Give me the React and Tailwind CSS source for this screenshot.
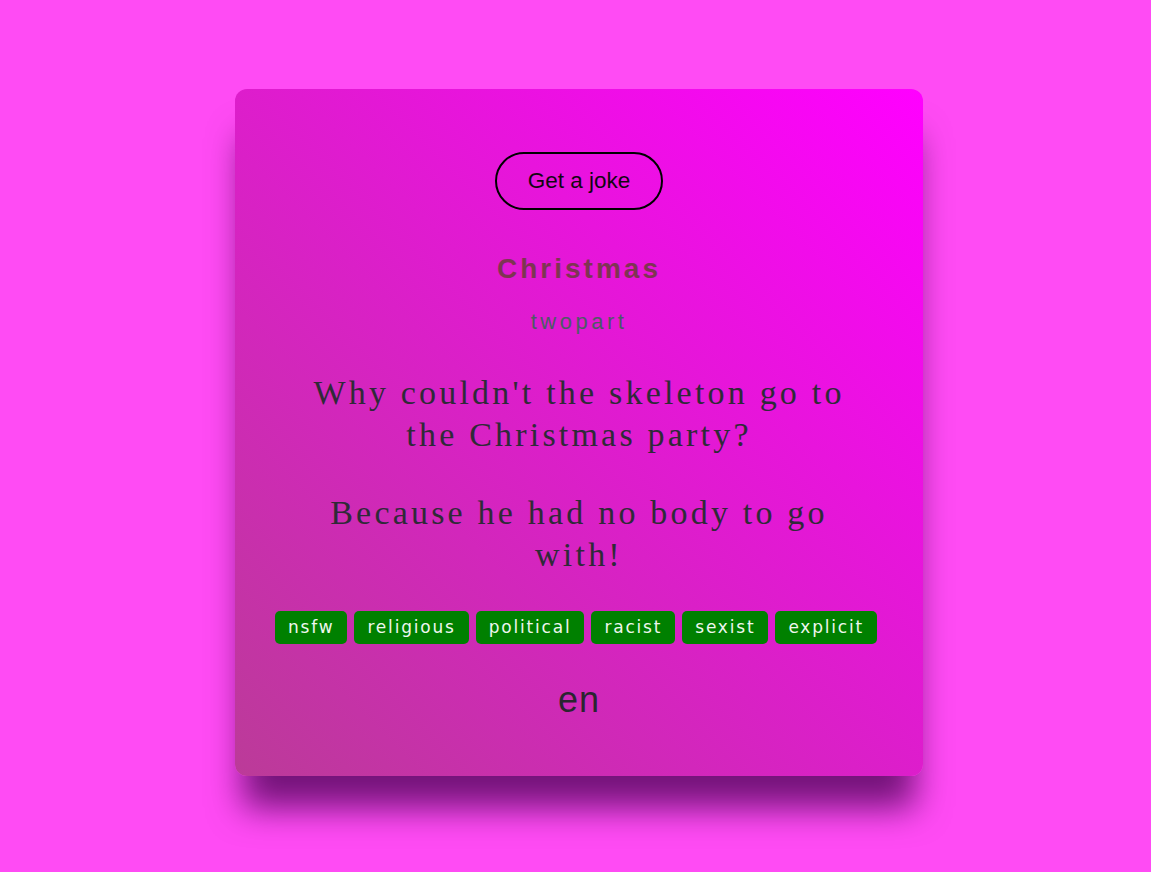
export default function App() {
  const tags = ["nsfw", "religious", "political", "racist", "sexist", "explicit"];
  return (
    <div className="min-h-screen w-full bg-[#ff4bf4] flex justify-center pt-[89px] pb-[96px]">
      <div className="ml-[7px] w-[688px] h-[687px] rounded-xl bg-linear-to-tr/srgb from-[#bb3b98] to-[#ff00ff] shadow-[0_40px_34px_-8px_rgba(70,0,80,0.75)] flex flex-col items-center pt-[63px] px-[36px]">
        <button className="h-[58px] w-[168px] rounded-full border-2 border-black text-[22.5px] leading-[26px] text-[#120612] font-['Liberation_Sans',Arial,sans-serif]">
          Get a joke
        </button>
        <h2 className="mt-[43px] h-[32px] text-[28px] leading-[32px] font-bold tracking-[3px] text-[#7e3552] font-['Liberation_Sans',Arial,sans-serif]">
          Christmas
        </h2>
        <div className="mt-[24px] h-[26px] text-[22px] leading-[26px] tracking-[3.5px] text-[#4e5a66] font-['Liberation_Sans',Arial,sans-serif]">
          twopart
        </div>
        <p className="mt-[37px] w-[570px] text-center text-[34px] leading-[42px] tracking-[3.2px] text-[#2f2a38] font-['Liberation_Serif','Times_New_Roman',serif]">
          Why couldn't the skeleton go to the Christmas party?
        </p>
        <p className="mt-[36px] w-[570px] text-center text-[34px] leading-[42px] tracking-[3.2px] text-[#2f2a38] font-['Liberation_Serif','Times_New_Roman',serif]">
          Because he had no body to go with!
        </p>
        <div className="mt-[35px] mr-[6px] flex gap-[7px] justify-center">
          {tags.map((t) => (
            <span
              key={t}
              className="h-[33px] px-[13px] flex items-center rounded-[5px] bg-[#008000] text-[#eef6ee] text-[17px] tracking-[1.8px] font-['DejaVu_Sans',Verdana,sans-serif]"
            >
              {t}
            </span>
          ))}
        </div>
        <div className="mt-[35px] h-[42px] text-[36px] leading-[42px] tracking-[1px] text-[#2b2530] font-['Liberation_Sans',Arial,sans-serif]">
          en
        </div>
      </div>
    </div>
  );
}
